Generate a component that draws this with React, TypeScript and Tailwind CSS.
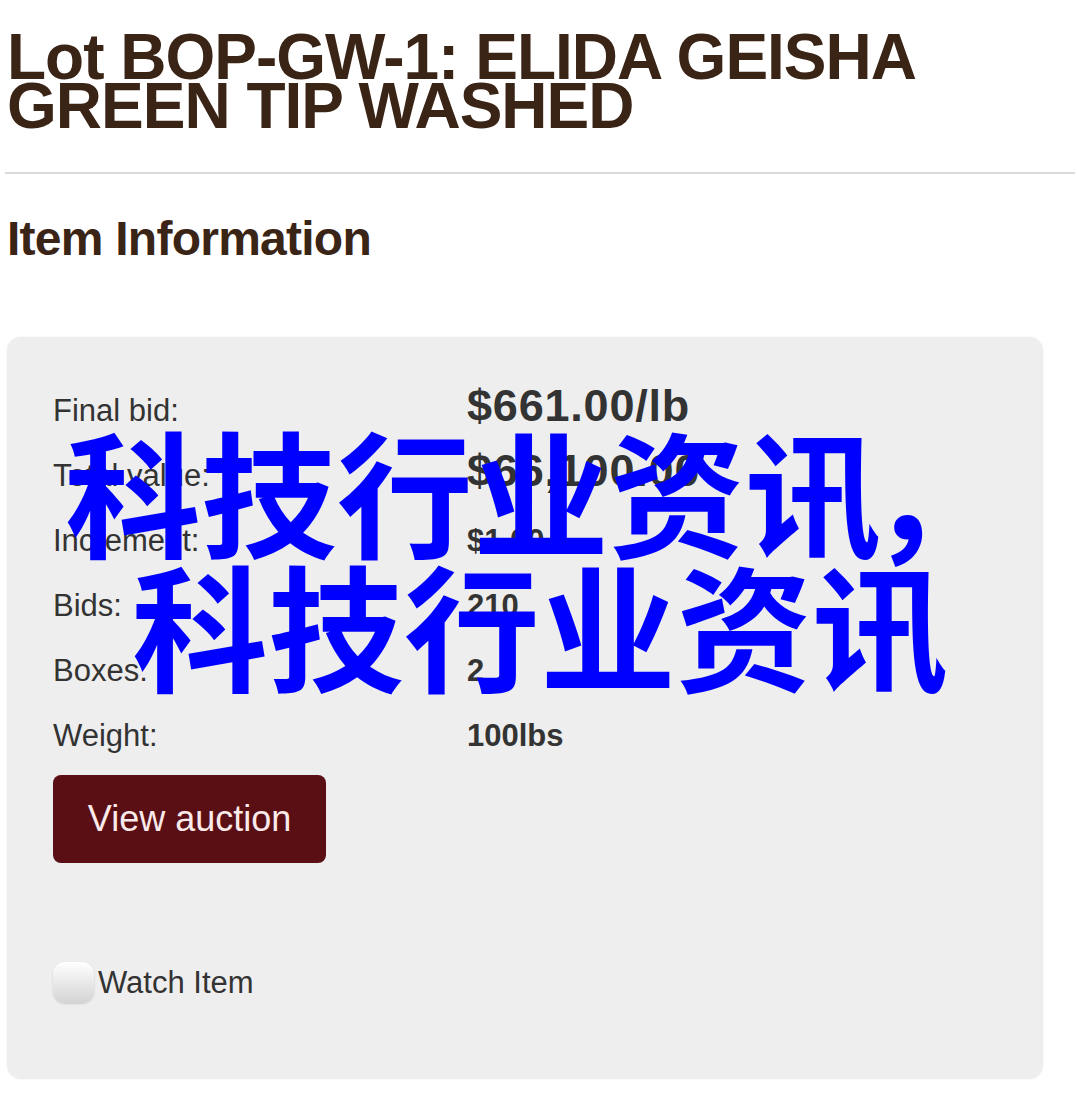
import React from 'react';

const rows: { label: string; value: string; big?: boolean }[] = [
  { label: 'Final bid:', value: '$661.00/lb', big: true },
  { label: 'Total value:', value: '$66,100.00', big: true },
  { label: 'Increment:', value: '$1.00' },
  { label: 'Bids:', value: '210' },
  { label: 'Boxes:', value: '2' },
  { label: 'Weight:', value: '100lbs' },
];

export default function App() {
  return (
    <div className="relative min-h-screen bg-white font-['Liberation_Sans',Arial,sans-serif]">
      <h1 className="px-[7px] pt-[33px] text-[64px] font-bold leading-[49px] tracking-[-1px] text-[#3a2416]">
        Lot BOP-GW-1: ELIDA GEISHA
        <br />
        GREEN TIP WASHED
      </h1>

      <div className="ml-[5px] mr-[2px] mt-[41px] h-[2px] bg-[#dadada]" />

      <h2 className="mt-[41px] px-[7px] text-[48px] font-bold leading-none tracking-[-0.75px] text-[#3a2416]">
        Item Information
      </h2>

      <section className="ml-[7px] mt-[74px] w-[1036px] rounded-[14px] bg-[#eeeeee] pb-[76px] pl-[46px] pt-[46px] shadow-[0_0_3px_rgba(0,0,0,0.06)]">
        {rows.map((row) => (
          <div key={row.label} className="flex h-[65px] items-baseline text-[#333333]">
            <span className="w-[414px] text-[31px] leading-[56px]">{row.label}</span>
            <span
              className={
                row.big
                  ? 'text-[45px] font-bold leading-none tracking-[0.8px]'
                  : 'text-[31px] font-bold leading-[56px]'
              }
            >
              {row.value}
            </span>
          </div>
        ))}

        <button
          type="button"
          className="mt-[2px] flex h-[88px] w-[273px] items-center justify-center rounded-[8px] bg-[#5a0f15] text-[36px] leading-none text-[#fbeaea]"
        >
          View auction
        </button>

        <label className="mt-[99px] flex items-center gap-[4px] text-[31px] leading-none text-[#333333]">
          <span className="h-[41px] w-[41px] rounded-[12px] bg-gradient-to-b from-white to-[#d4d4d4] shadow-[0_1px_2px_rgba(0,0,0,0.15)]" />
          Watch Item
        </label>
      </section>

      <div className="pointer-events-none absolute left-0 top-[422px] w-full font-['Noto_Sans_CJK_SC',sans-serif] text-[136px] font-bold leading-[134px] text-[#0000ff]">
        <div className="pl-[65px]">
          科技行业资讯<span className="-ml-[12px]">，</span>
        </div>
        <div className="pl-[132px]">科技行业资讯</div>
      </div>
    </div>
  );
}
